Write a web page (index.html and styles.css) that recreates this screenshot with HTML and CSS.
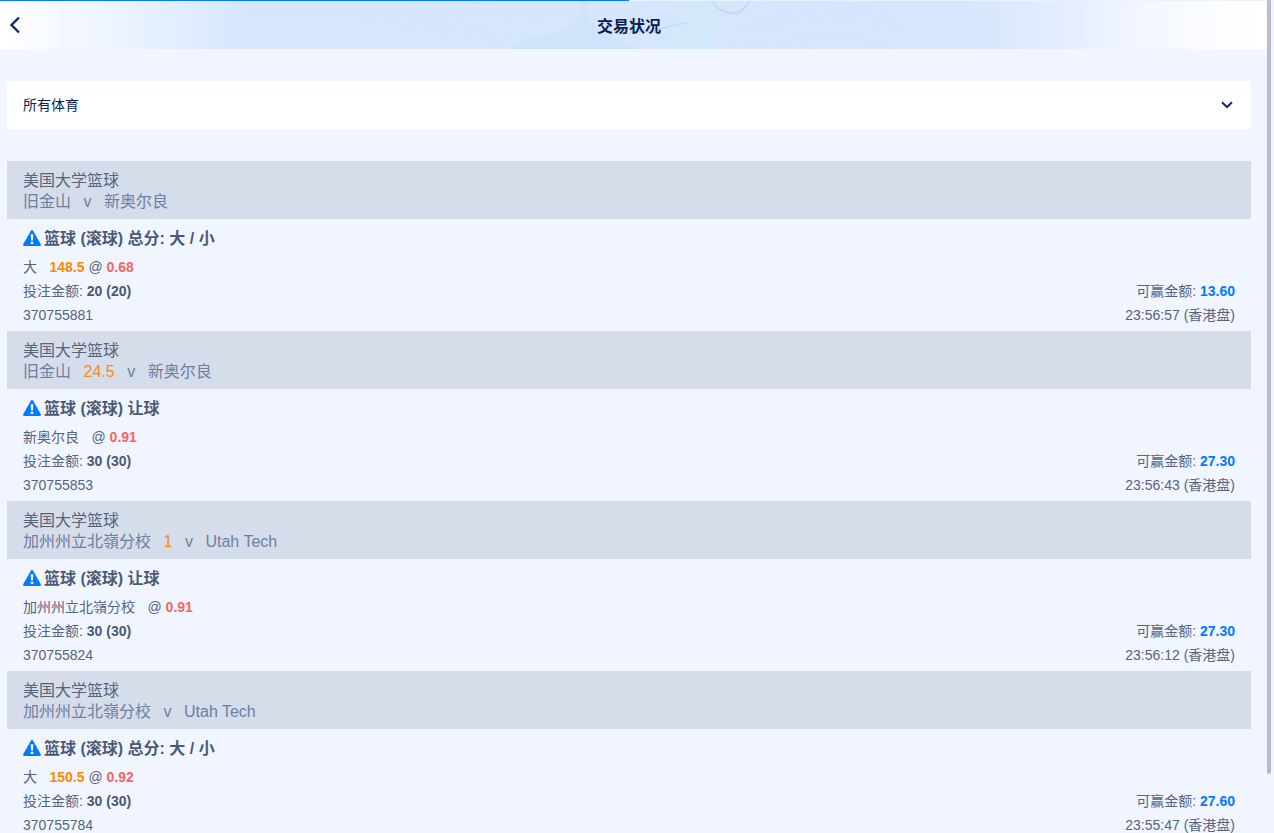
FILE: index.html
```html
<!DOCTYPE html>
<html lang="zh">
<head>
<meta charset="utf-8">
<title>交易状况</title>
<link rel="stylesheet" href="styles.css">
</head>
<body>
<div class="progress"><div class="progress-fill"></div></div>
<div class="thumb"></div>
<header class="topbar">
  <svg class="pattern" viewBox="0 0 1267 49" aria-hidden="true">
    <path class="glow" d="M665 49C672 30 678 10 684 0H730C716 20 712 36 716 49Z"/>
    <path class="swoosh" d="M583 0C580 16 575 27 560 32C540 37 522 36 510 49H640C625 40 600 36 590 22C586 14 586 6 587 0Z"/>
    <path class="arc" d="M711 0C716 9 726 14 735 13C742 12 747 6 750 0"/>
    <path class="seam" d="M625 34C640 30 655 30 664 28C672 25 680 24 688 23"/>
    <g class="lines">
      <path d="M340 12C400 6 470 20 530 49"/>
      <path d="M360 22C420 16 470 28 505 49"/>
      <path d="M400 30C430 26 460 34 480 49"/>
      <path d="M420 8C470 6 520 16 560 34"/>
      <path d="M470 2C500 6 530 14 555 24"/>
      <path d="M752 6C800 12 850 8 900 22"/>
      <path d="M745 16C800 24 860 18 915 34"/>
      <path d="M735 28C790 34 850 30 890 49"/>
      <path d="M725 40C760 42 790 42 815 49"/>
      <path d="M770 1C820 3 860 2 890 10"/>
    </g>
  </svg>
  <button class="back" type="button" aria-label="返回">
    <svg viewBox="0 0 12 18"><path d="M10 1.5 2.5 9l7.5 7.5"/></svg>
  </button>
  <h1 class="title">交易状况</h1>
</header>

<main class="page">
  <div class="filter">
    <span>所有体育</span>
    <svg class="chev" viewBox="0 0 12 8"><path d="M1 1.2 6 6l5-4.8"/></svg>
  </div>

  <section class="trade">
    <div class="match">
      <div class="league">美国大学篮球</div>
      <div class="teams"><span>旧金山</span><span>v</span><span>新奥尔良</span></div>
    </div>
    <div class="info">
      <h2 class="market">
        <svg class="warn" viewBox="0 .5 17 15"><path class="tri" d="M8.500 .5c.5 0 .9.300 1.200.8l7 12.300c.5.900-.1 1.900-1.200 1.900H1.500C.4 15.500-.2 14.500.3 13.600l7-12.300c.3-.5.700-.8 1.200-.8Z"/><path class="mark" d="M7.300 4.500h2.400L9.400 10.300H7.600ZM7.300 11.500h2.400v2.200H7.300Z"/></svg>
        篮球 (滚球) 总分: 大 / 小
      </h2>
      <div class="row"><div><span class="pick">大</span><b class="hc">148.5</b> @ <b class="odds">0.68</b></div></div>
      <div class="row"><div>投注金额: <b>20 (20)</b></div><div>可赢金额: <b class="win">13.60</b></div></div>
      <div class="row"><div>370755881</div><div>23:56:57 (香港盘)</div></div>
    </div>
  </section>

  <section class="trade">
    <div class="match">
      <div class="league">美国大学篮球</div>
      <div class="teams"><span>旧金山</span><span class="line">24.5</span><span>v</span><span>新奥尔良</span></div>
    </div>
    <div class="info">
      <h2 class="market">
        <svg class="warn" viewBox="0 .5 17 15"><path class="tri" d="M8.500 .5c.5 0 .9.300 1.200.8l7 12.300c.5.900-.1 1.900-1.200 1.900H1.500C.4 15.500-.2 14.500.3 13.600l7-12.300c.3-.5.700-.8 1.200-.8Z"/><path class="mark" d="M7.300 4.500h2.400L9.400 10.300H7.600ZM7.300 11.500h2.400v2.200H7.300Z"/></svg>
        篮球 (滚球) 让球
      </h2>
      <div class="row"><div><span class="pick">新奥尔良</span>@ <b class="odds">0.91</b></div></div>
      <div class="row"><div>投注金额: <b>30 (30)</b></div><div>可赢金额: <b class="win">27.30</b></div></div>
      <div class="row"><div>370755853</div><div>23:56:43 (香港盘)</div></div>
    </div>
  </section>

  <section class="trade">
    <div class="match">
      <div class="league">美国大学篮球</div>
      <div class="teams"><span>加州州立北嶺分校</span><span class="line">1</span><span>v</span><span>Utah Tech</span></div>
    </div>
    <div class="info">
      <h2 class="market">
        <svg class="warn" viewBox="0 .5 17 15"><path class="tri" d="M8.500 .5c.5 0 .9.300 1.200.8l7 12.300c.5.900-.1 1.900-1.200 1.900H1.500C.4 15.500-.2 14.500.3 13.600l7-12.300c.3-.5.700-.8 1.200-.8Z"/><path class="mark" d="M7.300 4.500h2.400L9.400 10.300H7.600ZM7.300 11.500h2.400v2.200H7.300Z"/></svg>
        篮球 (滚球) 让球
      </h2>
      <div class="row"><div><span class="pick">加州州立北嶺分校</span>@ <b class="odds">0.91</b></div></div>
      <div class="row"><div>投注金额: <b>30 (30)</b></div><div>可赢金额: <b class="win">27.30</b></div></div>
      <div class="row"><div>370755824</div><div>23:56:12 (香港盘)</div></div>
    </div>
  </section>

  <section class="trade">
    <div class="match">
      <div class="league">美国大学篮球</div>
      <div class="teams"><span>加州州立北嶺分校</span><span>v</span><span>Utah Tech</span></div>
    </div>
    <div class="info">
      <h2 class="market">
        <svg class="warn" viewBox="0 .5 17 15"><path class="tri" d="M8.500 .5c.5 0 .9.300 1.200.8l7 12.300c.5.900-.1 1.900-1.200 1.900H1.500C.4 15.500-.2 14.500.3 13.600l7-12.300c.3-.5.700-.8 1.200-.8Z"/><path class="mark" d="M7.300 4.500h2.400L9.400 10.300H7.600ZM7.300 11.500h2.400v2.200H7.300Z"/></svg>
        篮球 (滚球) 总分: 大 / 小
      </h2>
      <div class="row"><div><span class="pick">大</span><b class="hc">150.5</b> @ <b class="odds">0.92</b></div></div>
      <div class="row"><div>投注金额: <b>30 (30)</b></div><div>可赢金额: <b class="win">27.60</b></div></div>
      <div class="row"><div>370755784</div><div>23:55:47 (香港盘)</div></div>
    </div>
  </section>
</main>
</body>
</html>
```

FILE: styles.css
```css
html {
  background: #f0f5ff;
}
body {
  margin: 0;
  padding-right: 7px;
  background: #f0f5ff;
  color: #56647c;
  font-family: "Liberation Sans", "Noto Sans CJK SC", sans-serif;
  font-size: 14px;
}
.progress {
  position: absolute;
  top: 0;
  left: 0;
  width: 1267px;
  height: 1px;
  background: #e9f2fe;
  z-index: 2;
}
.progress-fill {
  width: 629px;
  height: 1px;
  background: #007aff;
}
.thumb {
  position: fixed;
  top: 0;
  right: 3px;
  width: 4px;
  height: 774px;
  border-radius: 0 0 2px 2px;
  background: #b5bccb;
  z-index: 3;
}
.topbar {
  position: relative;
  display: flex;
  align-items: center;
  justify-content: center;
  height: 49px;
  padding-right: 9px;
  overflow: hidden;
  background: linear-gradient(90deg, #fff 0, #d6e6fe 20%, #d6e6fe 76%, #e0ebff 82%, #f2f6ff 90%, #fbfcff 95%, #fff 100%);
}
.pattern {
  position: absolute;
  inset: 0;
  width: 100%;
  height: 100%;
}
.glow { fill: #cfeaf8; opacity: .8; }
.swoosh { fill: #c9e3f8; opacity: .65; }
.arc { fill: none; stroke: #c3daf2; stroke-width: 2; }
.seam { fill: none; stroke: #bad8ef; stroke-width: 1.500; opacity: .7; }
.lines path { fill: none; stroke: #c6dcf7; stroke-width: 1; stroke-dasharray: 1 2; opacity: .7; }
.back {
  position: absolute;
  left: 9px;
  top: 16px;
  width: 12px;
  height: 18px;
  padding: 0;
  border: 0;
  background: none;
}
.back svg { display: block; width: 12px; height: 18px; }
.back path { fill: none; stroke: #14296a; stroke-width: 2.400; }
.title {
  position: relative;
  margin: 0;
  color: #0b1f55;
  font-size: 16px;
  font-weight: 700;
}
.page {
  padding: 32px 16px 55px 7px;
}
.filter {
  display: flex;
  align-items: center;
  justify-content: space-between;
  height: 48px;
  margin-bottom: 32px;
  padding: 0 18px 0 16px;
  border-radius: 2px;
  background: #fff;
  color: #0b1f55;
}
.filter span { margin-top: -2px; }
.chev { width: 12px; height: 8px; }
.chev path { fill: none; stroke: #14296a; stroke-width: 2; }
.match {
  padding: 9px 16px 7px;
  background: #d5dcea;
  font-size: 16px;
  line-height: 21px;
}
.league { color: #56647c; }
.teams {
  display: flex;
  gap: 12.5px;
  color: #6d7fa3;
}
.line { color: #ff8a14; }
.info { padding: 0 16px 4px; }
.market {
  display: flex;
  align-items: center;
  gap: 3px;
  height: 36px;
  margin: 0;
  color: #4a5a75;
  font-size: 16px;
  font-weight: 700;
}
.warn { flex: none; width: 18px; height: 16px; margin-top: 2px; }
.tri { fill: #007aff; }
.mark { fill: #fff; }
.row {
  display: flex;
  justify-content: space-between;
  height: 24px;
  line-height: 24px;
}
.row b { color: #4a5a75; }
.pick { margin-right: 12.500px; }
.row .hc { color: #ff8800; }
.row .odds { color: #f56565; }
.row .win { color: #007aff; }
```
